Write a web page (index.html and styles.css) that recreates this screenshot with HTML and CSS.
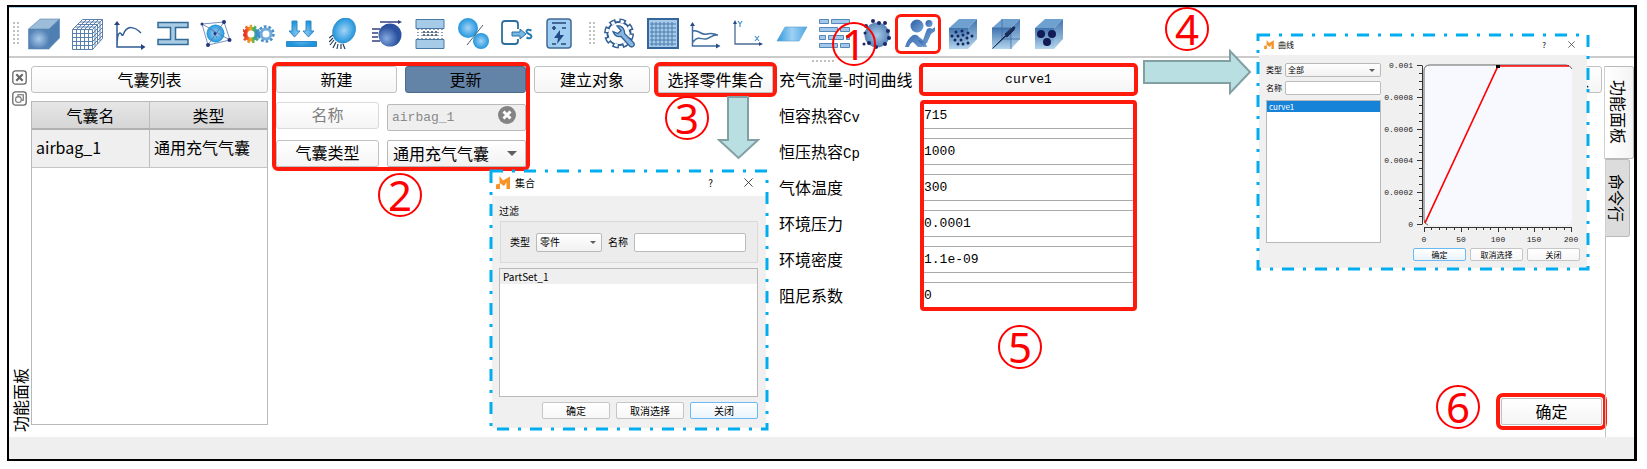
FILE: index.html
```html
<!DOCTYPE html>
<html lang="zh-CN">
<head>
<meta charset="utf-8">
<title>气囊</title>
<link rel="stylesheet" href="styles.css">
</head>
<body>
<div class="window">
  <svg class="defs" width="0" height="0" aria-hidden="true">
    <defs>
      <linearGradient id="face" x1="0" y1="0" x2="1" y2="1"><stop offset="0" stop-color="#5284b8"/><stop offset=".55" stop-color="#a3c6e6"/><stop offset="1" stop-color="#6496c8"/></linearGradient>
      <linearGradient id="fade" x1="0" y1="0" x2="0" y2="1"><stop offset="0" stop-color="#3f72ae"/><stop offset="1" stop-color="#b4d6ee"/></linearGradient>
      <radialGradient id="steel"><stop offset="0" stop-color="#a9cbe9"/><stop offset="1" stop-color="#5583b7"/></radialGradient>
      <radialGradient id="sky"><stop offset="0" stop-color="#a6d3f7"/><stop offset="1" stop-color="#1f96dc"/></radialGradient>
      <radialGradient id="navy" cx=".35" cy=".65"><stop offset="0" stop-color="#85aae0"/><stop offset="1" stop-color="#2c529f"/></radialGradient>
      <linearGradient id="body" x1="0" y1="0" x2="1" y2="1"><stop offset="0" stop-color="#2c5ba3"/><stop offset="1" stop-color="#78a8da"/></linearGradient>
      <linearGradient id="plane"><stop offset="0" stop-color="#2e9add"/><stop offset=".5" stop-color="#9fd0f4"/><stop offset="1" stop-color="#4ba9e2"/></linearGradient>
      <linearGradient id="rainbow"><stop offset="0" stop-color="#ea3028"/><stop offset=".45" stop-color="#f4a52a"/><stop offset=".7" stop-color="#55b848"/><stop offset="1" stop-color="#3090d0"/></linearGradient>
    </defs>
    <symbol id="logo" viewBox="0 0 14 13"><path d="M0 8.500 4 7.500V13H0zM3.500 0 7 4.500 14 .5V13h-3.500V6.500L8 10 3.500 7z" fill="#f79428"/></symbol>
    <symbol id="cross" viewBox="0 0 10 10"><path d="m.5.5 9 9m0-9-9 9" stroke="#333" fill="none"/></symbol>
  </svg>

  <header class="toolbar">
    <i class="grip"></i>
    <div class="tools">
      <button class="tool" aria-label="几何"><svg viewBox="0 0 32 32"><path d="M.5 11 12 1h19.500L21 11z" fill="#9dbcd9"/><path d="M21 11 31.500 1v19L21 30.500z" fill="#4f7fb2"/><path d="M.5 11H21v20H.5z" fill="url(#steel)"/><path d="M.5 11 12 1h19.500v19L21 31H.5zM21 11v20M21 11 31.500 1M.5 11H21" fill="none" stroke="#5583b0" stroke-width=".6"/></svg></button>
      <button class="tool" aria-label="网格"><svg viewBox="0 0 32 32" fill="none" stroke="#5a80ad"><path d="M1.500 11.500h20v20h-20zM1.500 11.500l10-10h20v19l-10 11M21.500 11.500l10-10M5.500 11.500v20M9.500 11.500v20M13.500 11.500v20M17.500 11.500v20M1.500 15.500h20M1.500 19.500h20M1.500 23.500h20M1.500 27.500h20M4 9h20v19.500M6.500 6.500h20V26M9 4h20v19M5.500 11.500l10-10M9.500 11.500l10-10M13.500 11.500l10-10M17.500 11.500l10-10M21.500 15.500l10-10M21.500 19.500l10-10M21.500 23.500l10-10M21.500 27.500l10-10"/></svg></button>
      <button class="tool" aria-label="曲线"><svg viewBox="0 0 32 32"><path d="M3 6v23h25M3 29c0-10 1-14 3-14s1 3 3 2C13 6 21 9 27 15" fill="none" stroke="#2f5c94" stroke-width="1.500"/><path d="M0 7 3 3l3 4zM27 26l4.500 3-4.500 3z" fill="#27447c"/></svg></button>
      <button class="tool" aria-label="截面"><svg viewBox="0 0 32 32"><path d="M1 4.500h30v5H18.500v12H31v5H1v-5h12.500v-12H1z" fill="#a9cbe4" stroke="#336b98" stroke-width="1.500"/></svg></button>
      <button class="tool" aria-label="节点"><svg viewBox="0 0 32 32"><circle cx="15.500" cy="15.500" r="9" fill="url(#sky)"/><path d="M2 6 24 4l6 18L8 27zM2 6l28 16M24 4 8 27M13 12l4 8" fill="none" stroke="#5876a8" stroke-width=".8"/><g fill="#24357d"><circle cx="24" cy="4" r="2"/><circle cx="2" cy="6" r="1.500"/><circle cx="29.500" cy="22" r="2"/><circle cx="8" cy="27" r="2"/><circle cx="15" cy="15.500" r="1.500"/></g></svg></button>
      <button class="tool" aria-label="结果"><svg viewBox="0 0 32 32" fill="none"><circle cx="8" cy="16" r="5.500" stroke="url(#rainbow)" stroke-width="4"/><circle cx="8" cy="16" r="8" stroke="url(#rainbow)" stroke-width="2.500" stroke-dasharray="2.500 2"/><circle cx="23" cy="16" r="5" stroke="#70abd9" stroke-width="3"/><circle cx="23" cy="16" r="7.500" stroke="#4a8cc7" stroke-width="2.500" stroke-dasharray="2.700 2"/></svg></button>
      <button class="tool" aria-label="载荷"><svg viewBox="0 0 32 32" fill="url(#sky)" stroke="#3289c6"><path d="M6 3h5v10h3L8.500 19 3 13h3zM20 3h5v10h3l-5.500 6L17 13h3zM.5 23.500h30v5H.5z"/></svg></button>
      <button class="tool" aria-label="约束"><svg viewBox="0 0 32 32"><ellipse cx="15" cy="13" rx="11" ry="13" transform="rotate(28 16 13)" fill="url(#sky)" stroke="#408cc4" stroke-width=".7"/><path d="m4 17-4 3m4 0-4 4m5-2-4 5m6-3-3 6m5-4-1 5m4-5v5m2-5 2 5" stroke="#26425f" stroke-width="1.200"/></svg></button>
      <button class="tool" aria-label="初速度"><svg viewBox="0 0 32 32"><circle cx="18" cy="17" r="11.500" fill="url(#navy)"/><path d="M8 4h20M0 11h8M0 15h6M0 19h6M0 23h8" stroke="#34417f" stroke-width="1.500"/><path d="m26 2 4 2-4 2z" fill="#34417f"/></svg></button>
      <button class="tool" aria-label="接触"><svg viewBox="0 0 32 32"><path d="M1 1.500h28v9H1zM1 21.500h28v9H1z" fill="#a6cbe9" stroke="#4a78a4"/><path d="M3 11v10M7 11v10M11 11v10M15 11v10M19 11v10M23 11v10M27 11v10" stroke="#274060" stroke-dasharray="1 2"/><path d="M8 14h14M8 17h14" stroke="#274060" stroke-width="1.500" stroke-dasharray="2 2"/></svg></button>
      <button class="tool" aria-label="连接"><svg viewBox="0 0 32 32"><circle cx="10" cy="10" r="10" fill="url(#sky)"/><circle cx="23" cy="23" r="8" fill="url(#sky)"/><path d="M9 27 25 7" stroke="#505f70"/></svg></button>
      <button class="tool" aria-label="导出"><svg viewBox="0 0 32 32"><path d="M17 11V6q0-3-3-3H4Q1 3 1 6v17q0 3 3 3h10q3 0 3-3v-2" fill="none" stroke="#2c719e" stroke-width="1.800"/><path d="M11 14h8v-3l6 5-6 5v-3h-8z" fill="#75b7e5" stroke="#2c719e"/><path d="M30.500 12.500q-5-2-5 1c0 3 5 2 5 5q-1 3-5 1" fill="none" stroke="#257bb1" stroke-width="2"/></svg></button>
      <button class="tool" aria-label="求解"><svg viewBox="0 0 32 32"><rect x="3" y="1" width="24" height="29" rx="3" fill="#9fcef2" stroke="#426b96" stroke-width="1.500"/><path d="M8 5h14M8 10h4m-2-2v4M18 10h4M8 26h4m5 0h5" stroke="#264978" stroke-width="1.700"/><path d="m16 12-6 8h4l-1 6 7-9h-4z" fill="#204b86"/></svg></button>
    </div>
    <i class="grip"></i>
    <div class="tools">
      <button class="tool" aria-label="设置"><svg viewBox="0 0 32 32" fill="none"><circle cx="15" cy="15.500" r="12.500" stroke="#315f94" stroke-width="5" stroke-dasharray="6.200 3.617"/><circle cx="15" cy="15.500" r="11.500" stroke="#315f94" stroke-width="2"/><circle cx="15" cy="15.500" r="12" stroke="#fff" stroke-width="3" stroke-dasharray="3.200 6.225" stroke-dashoffset="-1.300"/><circle cx="15" cy="15.500" r="10.500" fill="#fff"/><path d="M13 8q5-1 7 4c1 2 0 3 1 4l9 9q1 3-2 4l-2-.500-9-10q-6 1-8-5l5 2 3-3z" fill="#86b6e1" stroke="#315f94" stroke-width="1.300"/></svg></button>
      <button class="tool" aria-label="表格"><svg viewBox="0 0 32 32"><path d="M1 1h30v29H1z" fill="#a7cae9" stroke="#34659b" stroke-width="2"/><path d="M5 4v24M9 4v24M13 4v24M17 4v24M21 4v24M25 4v24M3 6h26M3 10h26M3 14h26M3 18h26M3 22h26M3 26h26" stroke="#4b7dae"/></svg></button>
      <button class="tool" aria-label="曲线组"><svg viewBox="0 0 32 32"><path d="M2.500 7v21H27M3 13c6-2 8 5 14 3s8 1 11 1M3 24c6-7 8-2 13-3s6-5 12-4" fill="none" stroke="#3d6c9e" stroke-width="1.500"/><path d="m0 8 2.500-4L5 8zM26 25.500l4.500 2.500-4.500 2.500z" fill="#284d83"/></svg></button>
      <button class="tool" aria-label="坐标系"><svg viewBox="0 0 32 32"><path d="M2 5v21h25" fill="none" stroke="#4d6c98" stroke-width="1.300"/><path d="m0 6 2-4 2 4zM26 24l4 2-4 2z" fill="#284d83"/><path d="M5 3l2 3v3m2-6L7 6M22 18l4 5m0-5-4 5" fill="none" stroke="#3f92d4" stroke-width="1.200"/></svg></button>
      <button class="tool" aria-label="平面"><svg viewBox="0 0 32 32"><path d="M9 9h22l-8 14H1z" fill="url(#plane)" stroke="#62a5d3" stroke-width=".7"/></svg></button>
      <button class="tool" aria-label="刚性墙"><svg viewBox="0 0 32 32" fill="#a2c9ec" stroke="#5587b7"><path d="M.5 1.500h9v4h-9zM12.500 1.500h18v4h-18zM.5 9.500h18v4h-18zM21.500 9.500h9v4h-9zM.5 17.500h6v4h-6zM9.500 17.500h15v4h-15zM27.500 17.500h3v4h-3zM.5 25.500h18v4h-18zM21.500 25.500h9v4h-9z"/></svg></button>
      <button class="tool" aria-label="爆炸"><svg viewBox="0 0 32 32"><circle cx="15" cy="17" r="12.500" fill="url(#steel)"/><g fill="#1c2865"><circle cx="4" cy="8" r="2"/><circle cx="11" cy="3" r="2"/><circle cx="17" cy="5" r="2"/><circle cx="23" cy="5" r="2"/><circle cx="26" cy="13" r="2"/><circle cx="27" cy="20" r="2"/><circle cx="23" cy="26" r="2"/><circle cx="14" cy="29" r="2"/><circle cx="7" cy="25" r="2"/><circle cx="2" cy="26" r="1.500"/><circle cx="3" cy="15" r="1.500"/></g></svg></button>
      <button class="tool marked" aria-label="气囊"><svg viewBox="0 0 32 32" fill="url(#body)"><circle cx="12" cy="8" r="6.500"/><circle cx="24" cy="5.500" r="3.500"/><path d="M0 29q2-8 8-12 4-1 6 2l4 3 4-11q3-2 5 0l3-2v4l-4 3-4 9-4 2-1 2h-4l-5-5q-3 1-4 5z"/><path d="m13 22 5 7h4l-2-5z"/></svg></button>
      <button class="tool" aria-label="粒子"><svg viewBox="0 0 32 32"><path d="m1 10 10-9h18L20 10z" fill="#6ea0d0"/><path d="m20 10 9-9v20l-9 10z" fill="url(#fade)"/><path d="M1 10h19v21H1z" fill="url(#fade)"/><g fill="#14265f"><circle cx="8" cy="14" r="1.500"/><circle cx="14" cy="13" r="1.500"/><circle cx="20" cy="15" r="1.500"/><circle cx="4" cy="18" r="1.500"/><circle cx="10" cy="18" r="1.500"/><circle cx="15" cy="17" r="1.500"/><circle cx="24" cy="18" r="1.500"/><circle cx="19" cy="20" r="1.500"/><circle cx="7" cy="22" r="1.500"/><circle cx="13" cy="22" r="1.500"/><circle cx="10" cy="26" r="1.500"/><circle cx="15" cy="26" r="1.500"/><circle cx="20" cy="25" r="1.500"/></g></svg></button>
      <button class="tool" aria-label="方向"><svg viewBox="0 0 32 32"><path d="m1 10 10-9h18L20 10z" fill="#6ea0d0"/><path d="m20 10 9-9v20l-9 10z" fill="url(#fade)"/><path d="M1 10h19v21H1z" fill="url(#fade)"/><path d="M11 1v20h18M1 31l10-10M1 10h19v21" fill="none" stroke="#446da3" stroke-width=".8"/><path d="M2 30 15 18l-1-2 8-7h2l-1 3-7 7-2-1z" fill="#1b2c59" stroke="#1b2c59"/></svg></button>
      <button class="tool" aria-label="孔隙"><svg viewBox="0 0 32 32"><path d="m1 10 10-9h18L20 10z" fill="#6ea0d0"/><path d="m20 10 9-9v20l-9 10z" fill="url(#fade)"/><path d="M1 10h19v21H1z" fill="url(#fade)"/><g fill="#111b55"><circle cx="7" cy="16" r="4"/><circle cx="18" cy="16" r="4"/><circle cx="13" cy="24" r="4"/></g></svg></button>
    </div>
  </header>

  <main class="workspace">
    <aside class="dock">
      <div class="dock-buttons">
        <button class="dock-button" aria-label="关闭面板"><svg viewBox="0 0 14 14" fill="none" stroke="#666"><rect x=".75" y=".75" width="12.500" height="12.500" rx="2.500" stroke-width="1.200"/><path d="m4 4 6 6m0-6-6 6" stroke-width="2"/></svg></button>
        <button class="dock-button" aria-label="浮动面板"><svg viewBox="0 0 14 14" fill="none" stroke="#666"><rect x=".75" y=".75" width="12.500" height="12.500" rx="2.500" stroke-width="1.200"/><path d="M5.500 5V3.500h5v5H9"/><rect x="3.500" y="5.500" width="5" height="5" rx="1.500"/></svg></button>
      </div>
      <span class="dock-title">功能面板</span>
    </aside>

    <section class="list-panel">
      <button class="btn">气囊列表</button>
      <div class="table-box">
        <table class="bags">
          <thead><tr><th>气囊名</th><th>类型</th></tr></thead>
          <tbody><tr><td>airbag_1</td><td>通用充气气囊</td></tr></tbody>
        </table>
      </div>
    </section>

    <section class="editor marked">
      <div class="pair"><button class="btn">新建</button><button class="btn active">更新</button></div>
      <div class="named">
        <label class="btn dim" for="bag-name">名称</label>
        <div class="clearable"><input class="text" id="bag-name" value="airbag_1" disabled><button class="clear" aria-label="清除"><svg viewBox="0 0 18 18"><circle cx="9" cy="9" r="9" fill="#848484"/><path d="m5.500 5.500 7 7m0-7-7 7" stroke="#fff" stroke-width="3"/></svg></button></div>
      </div>
      <div class="named">
        <label class="btn" for="bag-type">气囊类型</label>
        <div class="combo"><select id="bag-type"><option>通用充气气囊</option></select></div>
      </div>
    </section>

    <button class="btn build">建立对象</button>
    <button class="btn choose marked">选择零件集合</button>

    <section class="params">
      <label for="curve">充气流量-时间曲线</label>
      <button class="btn curve marked" id="curve">curve1</button>
      <div class="names">
        <label for="cv">恒容热容<span class="mono">Cv</span></label>
        <label for="cp">恒压热容<span class="mono">Cp</span></label>
        <label for="temp">气体温度</label>
        <label for="pressure">环境压力</label>
        <label for="density">环境密度</label>
        <label for="damping">阻尼系数</label>
      </div>
      <div class="values marked">
        <input id="cv" value="715">
        <input id="cp" value="1000">
        <input id="temp" value="300">
        <input id="pressure" value="0.0001">
        <input id="density" value="1.1e-09">
        <input id="damping" value="0">
      </div>
    </section>

    <section class="actions">
      <button class="btn extra">选取</button>
      <button class="btn confirm marked">确定</button>
    </section>

    <nav class="tabs">
      <button class="tab current">功能面板</button>
      <button class="tab">命令行</button>
    </nav>
    <i class="handle"></i>
  </main>
  <footer class="status"></footer>
</div>

<section class="dialog set-dialog">
  <svg class="dashes" aria-hidden="true"><rect x="0" y="0" width="100%" height="100%"/></svg>
  <div class="titlebar"><svg class="logo"><use href="#logo"/></svg><h2>集合</h2><button class="help" aria-label="帮助">?</button><button class="close" aria-label="关闭窗口"><svg><use href="#cross"/></svg></button></div>
  <div class="dialog-body">
    <p>过滤</p>
    <div class="filter">
      <label for="set-type">类型</label>
      <div class="combo"><select id="set-type"><option>零件</option></select></div>
      <label for="set-name">名称</label>
      <input id="set-name">
    </div>
    <ul class="items"><li>PartSet_1</li></ul>
    <div class="buttons"><button>确定</button><button>取消选择</button><button class="focus">关闭</button></div>
  </div>
</section>

<section class="dialog curve-dialog">
  <svg class="dashes" aria-hidden="true"><rect x="0" y="0" width="100%" height="100%"/></svg>
  <div class="titlebar"><svg class="logo"><use href="#logo"/></svg><h2>曲线</h2><button class="help" aria-label="帮助">?</button><button class="close" aria-label="关闭窗口"><svg><use href="#cross"/></svg></button></div>
  <div class="curve-body">
    <div class="curve-list">
      <div class="line"><label for="curve-type">类型</label><div class="combo"><select id="curve-type"><option>全部</option></select></div></div>
      <div class="line"><label for="curve-name">名称</label><input id="curve-name"></div>
      <ul class="items"><li>curve1</li></ul>
    </div>
    <div class="curve-view">
      <svg class="chart" viewBox="0 0 196 190" role="img" aria-label="curve1">
        <rect x="40" y="7" width="148" height="160" rx="6" fill="#f8f8ff"/>
        <path d="M44 167q-4-1-4-6V13q0-6 6-6h136q4 0 6 4" fill="none" stroke="#666"/>
        <path d="M41 165 114 8h71" fill="none" stroke="#f00" stroke-width="1.700"/>
        <path d="M112 7h4v3h-4z"/>
        <path d="M38.500 7.500v159M33 7.500h5M33 39.500h5M33 71.500h5M33 102.500h5M33 134.500h5M33 166.500h5M35 15.500h3M35 23.500h3M35 31.500h3M35 47.500h3M35 55.500h3M35 63.500h3M35 79.500h3M35 87.500h3M35 94.500h3M35 110.500h3M35 118.500h3M35 126.500h3M35 142.500h3M35 150.500h3M35 158.500h3M40 169.500h148M40.500 169v5M77.500 169v5M114.500 169v5M150.500 169v5M187.500 169v5M47.500 169v3M55.500 169v3M62.500 169v3M70.500 169v3M84.500 169v3M92.500 169v3M99.500 169v3M106.500 169v3M121.500 169v3M128.500 169v3M136.500 169v3M143.500 169v3M158.500 169v3M165.500 169v3M172.500 169v3M180.500 169v3" stroke="#333"/>
        <g text-anchor="end"><text x="29" y="10">0.001</text><text x="29" y="42">0.0008</text><text x="29" y="74">0.0006</text><text x="29" y="105">0.0004</text><text x="29" y="137">0.0002</text><text x="29" y="169">0</text></g>
        <g text-anchor="middle"><text x="40" y="184">0</text><text x="77" y="184">50</text><text x="114" y="184">100</text><text x="150" y="184">150</text><text x="187" y="184">200</text></g>
      </svg>
      <div class="buttons"><button class="focus">确定</button><button>取消选择</button><button>关闭</button></div>
    </div>
  </div>
</section>

<svg class="arrow down" viewBox="0 0 43 65"><path d="M11 2h20v43h10L21.500 63 2 45h9z"/></svg>
<svg class="arrow right" viewBox="0 0 110 46"><path d="M2 12h86V2l20 21-20 21V34H2z"/></svg>
<span class="step s1">1</span>
<span class="step s2">2</span>
<span class="step s3">3</span>
<span class="step s4">4</span>
<span class="step s5">5</span>
<span class="step s6">6</span>
</body>
</html>
```
FILE: styles.css
```css
* { box-sizing: border-box; }

body {
  margin: 0;
  padding: 5px 10px 8px 7px;
  height: 100vh;
  position: relative;
  overflow: hidden;
  background: #fff;
  color: #000;
  font-family: "Noto Sans CJK SC", sans-serif;
  font-size: 16px;
}

button, input, select { font: inherit; color: inherit; margin: 0; padding: 0; border-radius: 0; }
.defs { position: absolute; }

.window {
  height: 100%;
  border: 2px solid #000;
  border-right-width: 3px;
  display: flex;
  flex-direction: column;
}

/* Toolbar */
.toolbar {
  display: flex;
  align-items: center;
  height: 51px;
  padding: 3px 4px 0;
  border-top: 1px solid #a9d4ea;
  border-bottom: 2px solid #cbcbcb;
}
.tools { display: flex; gap: 11px; padding: 0 11px 0 9px; }
.tools + .grip { margin-left: 2px; }
.tool { width: 32px; height: 32px; border: 0; background: none; }
.tool svg { display: block; width: 32px; height: 32px; }
.grip {
  width: 6px;
  height: 24px;
  background: radial-gradient(circle at 1px 1px, #c2c2c2 1px, transparent 1px) 0 0 / 4px 4px;
}

/* Work area */
.workspace {
  flex: 1;
  min-height: 0;
  display: flex;
  align-items: flex-start;
  gap: 8px;
  padding-top: 8px;
  position: relative;
}
.dock, .list-panel, .actions, .tabs { align-self: stretch; }
.dock {
  width: 22px;
  margin-right: -8px;
  padding: 4px 0 5px 3px;
  display: flex;
  flex-direction: column;
  justify-content: space-between;
}
.dock-buttons { display: grid; gap: 6px; }
.dock-button { width: 15px; height: 15px; border: 0; background: none; }
.dock-button svg { display: block; }
.dock-title {
  writing-mode: vertical-rl;
  text-orientation: sideways;
  transform: rotate(180deg);
  line-height: 16px;
  width: 16px;
}

.btn {
  display: block;
  height: 27px;
  line-height: 23px;
  text-align: center;
  white-space: nowrap;
  border: 1px solid #c1c1c1;
  border-radius: 3px;
  background: linear-gradient(#fff, #f5f5f5);
}
.btn.active { background: #6484a7; border-color: #4a6a8e; }
.btn.dim { color: #808080; border-color: #dadada; }
.marked { outline: 4px solid #ff1a0c; border-radius: 2px; }
.tool.marked { width: 38px; margin-left: -6px; padding-left: 6px; outline-width: 3px; outline-offset: 1px; }

.list-panel { width: 237px; display: flex; flex-direction: column; gap: 8px; padding-bottom: 12px; }
.table-box { flex: 1; border: 1px solid #b9b9b9; }
.bags { width: 100%; border-collapse: collapse; table-layout: fixed; line-height: 22px; }
.bags th {
  height: 27px;
  padding: 0;
  font-weight: 400;
  background: linear-gradient(#e6e6e6, #d6d6d6);
  border-bottom: 2px solid #b0b0b0;
}
.bags td { height: 38px; padding: 0 4px 2px; background: #efefef; border-bottom: 1px solid #c4c4c4; white-space: nowrap; }
.bags tr > :first-child { border-right: 1px solid #bdbdbd; }

.editor { width: 250px; display: grid; gap: 9px; }
.pair { display: grid; grid-template-columns: 1fr 1fr; gap: 8px; }
.named { display: grid; grid-template-columns: 103px 1fr; gap: 8px; }
.clearable { position: relative; }
.text {
  width: 100%;
  height: 27px;
  padding: 0 4px;
  font: 13px "Liberation Mono", monospace;
  color: #8a8a8a;
  background: #efefef;
  border: 1px solid #bababa;
  border-radius: 2px;
}
.clear { position: absolute; right: 10px; top: 4px; width: 18px; height: 18px; border: 0; background: none; }
.clear svg { display: block; }
.combo { position: relative; }
.combo::after {
  content: "";
  position: absolute;
  right: 9px;
  top: 50%;
  margin-top: -3px;
  border: 5px solid transparent;
  border-top-color: #5e5e5e;
  border-bottom: 0;
}
.combo select {
  appearance: none;
  display: block;
  width: 100%;
  height: 27px;
  padding: 0 5px 1px;
  border: 1px solid #bababa;
  border-radius: 2px;
  background: linear-gradient(#fff, #f1f1f1);
}

.build { width: 116px; }
.choose { width: 115px; outline-offset: 0; }

.params {
  display: grid;
  grid-template-columns: 135px 213px;
  gap: 9px 8px;
  margin-left: -2px;
  line-height: 26px;
  white-space: nowrap;
}
.names { display: grid; grid-auto-rows: 27px; gap: 9px; }
.mono, .curve, .values { font-family: "Liberation Mono", monospace; }
.mono { font-size: 14px; }
.curve { font-size: 13px; outline-offset: -1px; border-color: #eee; }
.values { display: grid; grid-auto-rows: 27px; gap: 9px; outline-offset: -2px; }
.values input {
  width: 100%;
  height: 27px;
  font-size: 13px;
  padding: 0 2px;
  background: #fff;
  border: 0;
  border-top: 1px solid #aaa;
  border-bottom: 1px solid #aaa;
}

.actions {
  flex: 1;
  display: flex;
  flex-direction: column;
  align-items: flex-end;
  justify-content: space-between;
  padding-bottom: 12px;
  margin-right: -6px;
}
.extra { padding: 0 12px; }
.confirm { width: 101px; outline-offset: 1px; }

.tabs { width: 30px; display: flex; flex-direction: column; align-items: flex-start; background: linear-gradient(90deg, transparent 1px, #c0c0c0 1px, #c0c0c0 2px, transparent 2px); }
.tab {
  writing-mode: vertical-rl;
  text-orientation: sideways;
  width: 25px;
  height: 78px;
  margin-left: 1px;
  line-height: 24px;
  text-align: center;
  border: 1px solid #b9b9b9;
  border-left-color: #d0d0d0;
  border-radius: 0 3px 3px 0;
  background: #dcdcdc;
}
.tab.current { width: 30px; height: 93px; margin-left: 0; line-height: 28px; background: linear-gradient(90deg, #fff, #f4f4f4); }

.handle {
  position: absolute;
  left: 803px;
  top: 2px;
  width: 22px;
  height: 3px;
  background: radial-gradient(circle at 1px 1px, #c0c0c0 1px, transparent 1px) 0 0 / 4px 4px;
}
.status { height: 22px; background: #efefef; }

/* Floating dialogs */
.dialog { position: absolute; background: #f0f0f0; line-height: 1; white-space: nowrap; display: flex; flex-direction: column; }
.dialog p, .dialog h2, .dialog ul { margin: 0; padding: 0; font: inherit; list-style: none; }
.dashes { position: absolute; left: -1px; top: -1px; width: calc(100% + 2px); height: calc(100% + 2px); overflow: visible; pointer-events: none; }
.dashes rect { fill: none; stroke: #00aeef; stroke-width: 3px; stroke-dasharray: 12px 9px 3px 9px; }
.titlebar { display: flex; align-items: center; gap: 5px; background: #fff; }
.titlebar button { border: 0; background: none; }
.titlebar svg { display: block; width: 100%; height: 100%; }
.help { margin-left: auto; }
.dialog input { border: 1px solid #bcbcbc; border-radius: 2px; background: #fff; min-width: 0; }
.dialog .items { border: 1px solid #b9b9b9; background: #fff; }
.dialog .buttons { display: flex; justify-content: flex-end; }
.dialog .buttons button { border: 1px solid #c6c6c6; border-radius: 2px; background: linear-gradient(#fff, #f7f7f7); }
.dialog .buttons .focus { border-color: #6cbaf5; background: linear-gradient(#fff, #eaf4fc); }

.set-dialog { left: 492px; top: 172px; width: 274px; height: 256px; font-size: 10px; }
.set-dialog .titlebar { height: 24px; padding: 0 13px 3px 4px; }
.set-dialog .titlebar .logo { width: 14px; height: 13px; }
.set-dialog .close { width: 9px; height: 9px; margin-left: 26px; }
.dialog-body { flex: 1; display: flex; flex-direction: column; padding: 10px 8px 9px 7px; }
.filter {
  display: flex;
  align-items: center;
  gap: 6px;
  height: 42px;
  margin: 5px 0 5px 1px;
  padding: 0 11px 0 9px;
  border: 1px solid #d9d9d9;
  background: #ececec;
}
.filter select, .filter input { height: 19px; }
.filter .combo { width: 66px; }
.filter select { padding: 0 3px; }
.filter input { flex: 1; }
.filter .combo::after, .curve-list .combo::after { border-width: 3px; border-bottom: 0; margin-top: -1px; right: 6px; }
.set-dialog .items { flex: 1; }
.set-dialog .items li { height: 15px; line-height: 15px; padding-left: 3px; background: #efefef; }
.set-dialog .buttons { gap: 6px; margin-top: 5px; }
.set-dialog .buttons button { width: 68px; height: 17px; line-height: 14px; }

.curve-dialog { left: 1259px; top: 36px; width: 328px; height: 232px; font-size: 8px; }
.curve-dialog .titlebar { height: 19px; padding: 0 12px 2px 5px; gap: 4px; }
.curve-dialog .titlebar .logo { width: 10px; height: 9px; }
.curve-dialog .close { width: 7px; height: 7px; margin-left: 18px; }
.curve-body { flex: 1; display: flex; padding: 3px 7px 7px; }
.curve-list { width: 116px; display: flex; flex-direction: column; gap: 4px; padding: 5px 0 18px; }
.line { display: flex; align-items: center; gap: 3px; }
.line .combo, .line input { flex: 1; }
.line select, .line input { height: 14px; }
.line select { padding: 0 2px; }
.curve-list .items { flex: 1; margin-top: 1px; }
.curve-list li { height: 11px; line-height: 11px; padding-left: 2px; color: #fff; background: #1683d8; }
.curve-view { flex: 1; display: flex; flex-direction: column; padding-left: 3px; }
.chart { display: block; width: 196px; height: 190px; }
.chart text { font: 8px "Liberation Mono", monospace; fill: #222; }
.curve-dialog .buttons { gap: 4px; }
.curve-dialog .buttons button { width: 53px; height: 13px; line-height: 10px; }

/* Step annotations */
.step {
  position: absolute;
  width: 44px;
  height: 44px;
  border: 2px solid #f00;
  border-radius: 50%;
  color: #f00;
  font: 42px/40px "Noto Sans", sans-serif;
  text-align: center;
}
.s1 { left: 832px; top: 22px; }
.s2 { left: 378px; top: 173px; }
.s3 { left: 665px; top: 96px; }
.s4 { left: 1165px; top: 7px; }
.s5 { left: 998px; top: 325px; }
.s6 { left: 1436px; top: 385px; }
.arrow { position: absolute; fill: #b9dfe2; stroke: #829fa3; stroke-width: 2px; }
.down { left: 717px; top: 95px; width: 43px; height: 65px; }
.right { left: 1142px; top: 49px; width: 110px; height: 46px; }
```
